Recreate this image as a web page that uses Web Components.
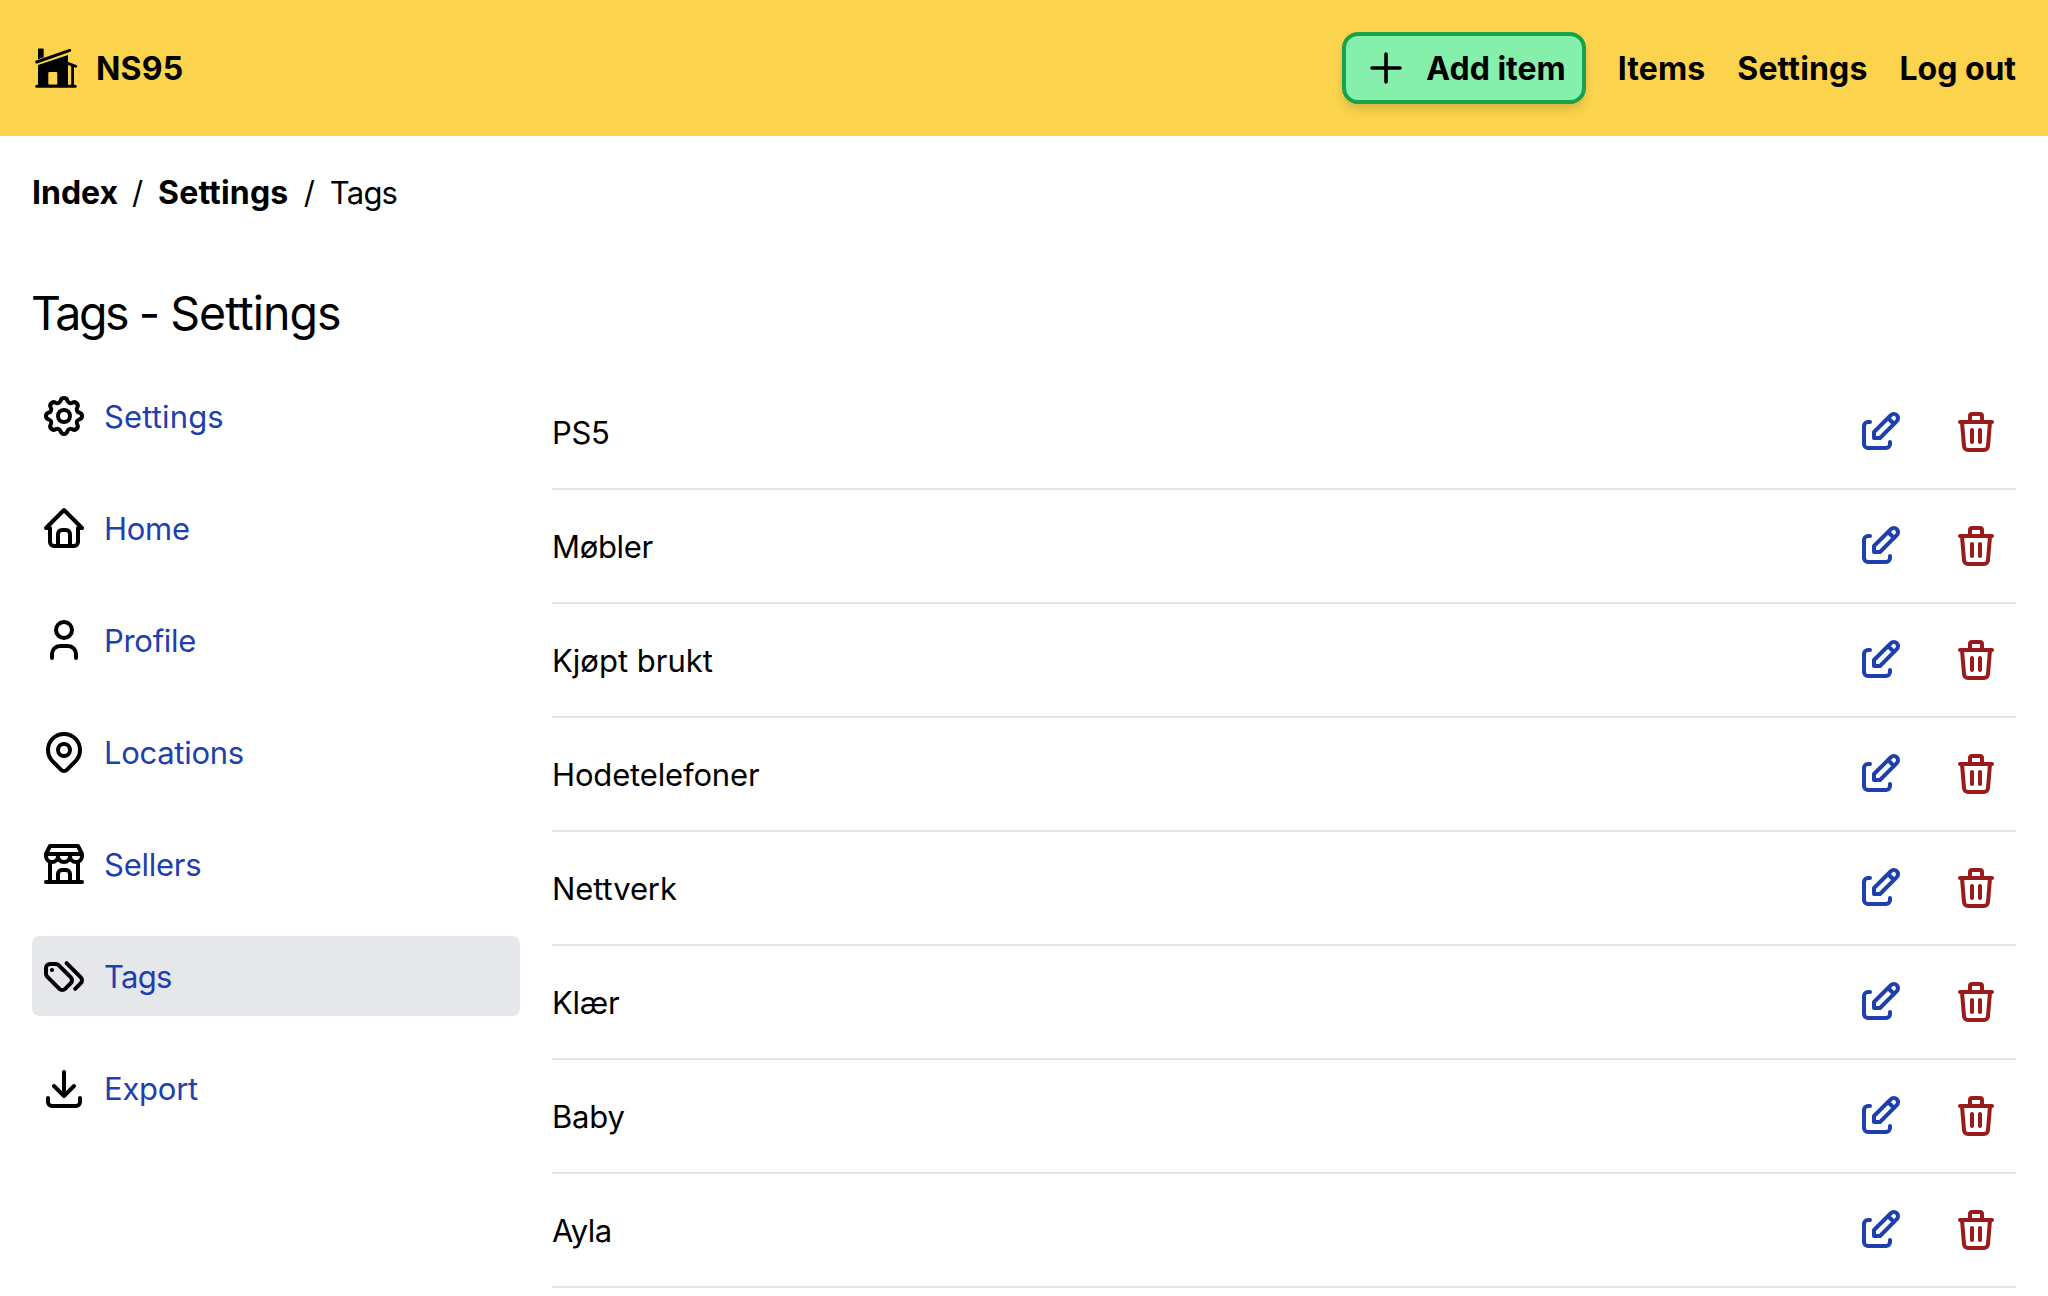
<!DOCTYPE html>
<html lang="en">
<head>
<meta charset="utf-8">
<title>Tags - Settings</title>
<style>
  html, body { margin: 0; background: #fff; }
  body { font-family: Inter, "Liberation Sans", sans-serif; font-size: 31px; line-height: 48px; color: #000; height: 1296px; overflow: hidden; }
</style>
</head>
<body>
<inventory-app></inventory-app>
<script>
const ICONS = {
  plus: '<path d="M12 5v14M5 12h14"/>',
  settings: '<path d="M10.325 4.317c.426-1.756 2.924-1.756 3.35 0a1.724 1.724 0 0 0 2.573 1.066c1.543-.94 3.31.826 2.37 2.37a1.724 1.724 0 0 0 1.065 2.572c1.756.426 1.756 2.924 0 3.35a1.724 1.724 0 0 0-1.066 2.573c.94 1.543-.826 3.31-2.37 2.37a1.724 1.724 0 0 0-2.572 1.065c-.426 1.756-2.924 1.756-3.35 0a1.724 1.724 0 0 0-2.573-1.066c-1.543.94-3.31-.826-2.37-2.37a1.724 1.724 0 0 0-1.065-2.572c-1.756-.426-1.756-2.924 0-3.35a1.724 1.724 0 0 0 1.066-2.573c-.94-1.543.826-3.31 2.37-2.37 1 .608 2.296.07 2.572-1.065z"/><circle cx="12" cy="12" r="3"/>',
  home: '<path d="M5 12H3l9-9 9 9h-2M5 12v7a2 2 0 0 0 2 2h10a2 2 0 0 0 2-2v-7"/><path d="M9 21v-6a2 2 0 0 1 2-2h2a2 2 0 0 1 2 2v6"/>',
  user: '<circle cx="12" cy="7" r="4"/><path d="M6 21v-2a4 4 0 0 1 4-4h4a4 4 0 0 1 4 4v2"/>',
  pin: '<circle cx="12" cy="11" r="3"/><path d="M17.657 16.657l-4.243 4.243a2 2 0 0 1-2.827 0l-4.244-4.243a8 8 0 1 1 11.314 0z"/>',
  store: '<path d="M3 21h18M3 7v1a3 3 0 0 0 6 0V7m0 1a3 3 0 0 0 6 0V7m0 1a3 3 0 0 0 6 0V7H3l2-4h14l2 4M5 21V10.85M19 21V10.85M9 21v-4a2 2 0 0 1 2-2h2a2 2 0 0 1 2 2v4"/>',
  tags: '<path d="M7.859 6H5.025A2.025 2.025 0 0 0 3 8.025v2.834c0 .537.213 1.052.593 1.432l6.116 6.116a2.025 2.025 0 0 0 2.864 0l2.834-2.834a2.025 2.025 0 0 0 0-2.864L9.29 6.593A2.025 2.025 0 0 0 7.859 6z"/><path d="M17.573 18.407l2.834-2.834a2.025 2.025 0 0 0 0-2.864L13.29 5.593M6 9h-.01"/>',
  download: '<path d="M4 17v2a2 2 0 0 0 2 2h12a2 2 0 0 0 2-2v-2M7 11l5 5 5-5M12 4v12"/>',
  edit: '<path d="M7 7H6a2 2 0 0 0-2 2v9a2 2 0 0 0 2 2h9a2 2 0 0 0 2-2v-1"/><path d="M20.385 6.585a2.1 2.1 0 0 0-2.97-2.97L9 12v3h3l8.385-8.415zM16 5l3 3"/>',
  trash: '<path d="M4 7h16M10 11v6M14 11v6M5 7l1 12a2 2 0 0 0 2 2h8a2 2 0 0 0 2-2l1-12M9 7V4a1 1 0 0 1 1-1h4a1 1 0 0 1 1 1v3"/>'
};

function define(name, render) {
  customElements.define(name, class extends HTMLElement {
    connectedCallback() {
      if (this.shadowRoot) return;
      this.attachShadow({ mode: 'open' }).innerHTML = render(this);
    }
  });
}

define('line-icon', el => `
  <style>:host{display:block;flex:none;width:48px;height:48px}svg{display:block}</style>
  <svg width="48" height="48" viewBox="0 0 24 24" fill="none" stroke="currentColor" stroke-width="${el.getAttribute('weight') || 2}" stroke-linecap="round" stroke-linejoin="round">${ICONS[el.getAttribute('name')]}</svg>`);

define('house-logo', () => `
  <style>:host{display:block;flex:none;width:48px;height:48px}svg{display:block}</style>
  <svg width="48" height="48" viewBox="0 0 48 48">
    <path d="M6 5.6q0-1 1-1h3.700q1 0 1 1V13.200L6 15.300z"/>
    <path d="M4.700 18 37.700 6.300" stroke="#000" stroke-width="3" stroke-linecap="round"/>
    <path fill-rule="evenodd" d="M6 20.900 36 11V41.500H6zM17.300 28q-1 0-1 1v10.700q0 1 1 1h7q1 0 1-1V29q0-1-1-1z"/>
    <path d="M35 19.100 43.800 22.300" stroke="#000" stroke-width="2.800" stroke-linecap="round"/>
    <path d="M39.200 20.500h2.800V41.500h-2.800z"/>
    <rect x="3.300" y="40.700" width="41.400" height="3" rx="1.500"/>
  </svg>`);

define('add-button', () => `
  <style>
    :host{display:block}
    button{box-sizing:border-box;display:flex;align-items:center;gap:16px;height:72px;padding:0 16px;border:4px solid #16a34a;border-radius:16px;background:#86efac;color:#000;font:inherit;letter-spacing:0;white-space:nowrap;box-shadow:0 8px 12px -2px rgb(0 0 0/.1),0 4px 8px -4px rgb(0 0 0/.1)}
    span{padding-top:2px}
  </style>
  <button><line-icon name="plus" weight="1.8"></line-icon><span><slot></slot></span></button>`);

define('app-header', () => `
  <style>
    :host{display:flex;align-items:center;justify-content:space-between;height:136px;box-sizing:border-box;padding:0 32px;background:#fcd34d;font-weight:700;font-size:32px}
    .brand,nav{display:flex;align-items:center}
    .brand{gap:16px}
    nav{gap:32px}
    a{white-space:nowrap;padding-top:2px}
  </style>
  <div class="brand"><house-logo></house-logo><a style="letter-spacing:.2px">NS95</a></div>
  <nav><add-button>Add item</add-button><a style="letter-spacing:.1px">Items</a><a style="letter-spacing:.15px">Settings</a><a style="letter-spacing:-.05px">Log out</a></nav>`);

define('bread-crumbs', () => `
  <style>
    :host{display:flex;gap:14px;padding:33px 32px 0}
    b{font-weight:700;font-size:32px}
    i{font-style:normal;width:12px}
    .last{letter-spacing:-.8px}
  </style>
  <b>Index</b><i>/</i><b style="letter-spacing:.15px">Settings</b><i style="margin-left:1.500px">/</i><span class="last">Tags</span>`);

define('side-link', el => `
  <style>
    :host{display:flex;align-items:center;gap:16px;height:80px;padding:0 8px;border-radius:8px}
    :host([active]){background:#e5e7eb}
    a{color:#1e40af;padding-top:2px;letter-spacing:${el.getAttribute('track')}px}
  </style>
  <line-icon name="${el.getAttribute('icon')}"></line-icon><a><slot></slot></a>`);

define('side-nav', () => `
  <style>:host{display:flex;flex-direction:column;gap:32px;width:488px;flex:none}</style>
  <side-link icon="settings" track="0.15">Settings</side-link>
  <side-link icon="home" track="-0.3">Home</side-link>
  <side-link icon="user" track="-0.3">Profile</side-link>
  <side-link icon="pin" track="-0.3">Locations</side-link>
  <side-link icon="store" track="-0.25">Sellers</side-link>
  <side-link icon="tags" track="-0.7" active>Tags</side-link>
  <side-link icon="download" track="-0.25">Export</side-link>`);

define('tag-row', el => `
  <style>
    :host{display:flex;align-items:center;height:112px;padding-right:16px;border-bottom:2px solid #e5e5e5}
    .name{flex:1;padding-top:2px;letter-spacing:${el.getAttribute('track')}px}
    .edit{color:#1e40af;margin-right:48px}
    .delete{color:#991b1b}
  </style>
  <span class="name"><slot></slot></span>
  <line-icon class="edit" name="edit"></line-icon>
  <line-icon class="delete" name="trash"></line-icon>`);

const TAGS = [['PS5', -0.3], ['Møbler', -0.35], ['Kjøpt brukt', 0], ['Hodetelefoner', -0.15], ['Nettverk', -0.1], ['Klær', -0.3], ['Baby', -0.2], ['Ayla', -0.5]];
define('tag-list', () => `
  <style>:host{display:block;flex:1}</style>
  ${TAGS.map(([name, track]) => `<tag-row track="${track}">${name}</tag-row>`).join('')}`);

define('page-title', () => `
  <style>
    :host{display:block;padding:64px 31px 31px}
    h1{margin:0;font-size:46.5px;line-height:64px;height:64px;font-weight:400;letter-spacing:-.95px;white-space:pre}
    .first{letter-spacing:-2.4px}
    .dash{letter-spacing:-1.5px}
  </style>
  <h1><span class="first">Tags</span><span class="dash"> - </span>Settings</h1>`);

define('inventory-app', () => `
  <style>
    :host{display:block}
    main{display:flex;gap:32px;padding:0 32px}
  </style>
  <app-header></app-header>
  <bread-crumbs></bread-crumbs>
  <page-title></page-title>
  <main><side-nav></side-nav><tag-list></tag-list></main>`);
</script>
</body>
</html>
